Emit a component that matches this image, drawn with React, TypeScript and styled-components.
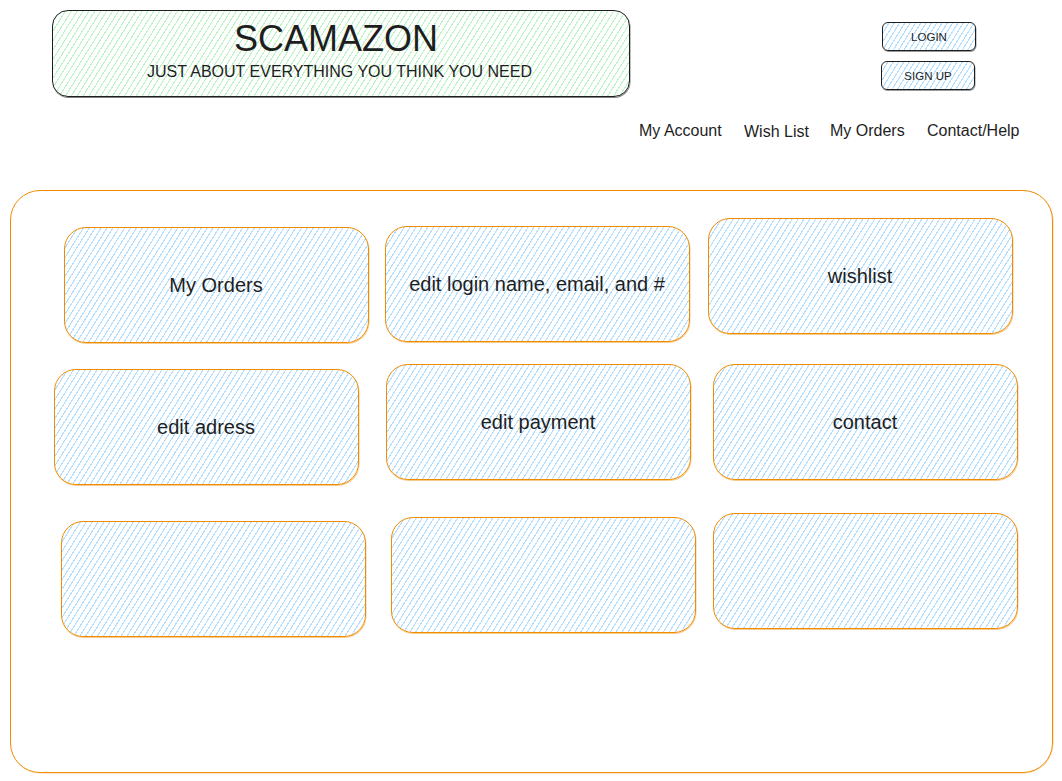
import React from 'react';
import styled, { createGlobalStyle } from 'styled-components';

const GlobalStyle = createGlobalStyle`
  body {
    margin: 0;
    background: #ffffff;
    font-family: "Liberation Sans", Arial, sans-serif;
    color: #1e1e1e;
  }
`;

// hachure fill like the sketch tool draws
const hachure = (color: string, gap = 5) =>
  `repeating-linear-gradient(122deg, ${color} 0 1px, transparent 1.2px ${gap}px)`;

const Page = styled.div`
  width: 1062px;
  height: 781px;
  display: flex;
  flex-direction: column;
  overflow: hidden;
`;

const TopRow = styled.div`
  display: flex;
  align-items: flex-start;
  padding: 10px 0 0 52px;
`;

const Banner = styled.header`
  width: 578px;
  height: 87px;
  box-sizing: border-box;
  border: 1.6px solid #1e1e1e;
  border-radius: 16px;
  box-shadow: 0.5px 1px 0 rgba(30, 30, 30, 0.55);
  background: ${hachure('rgba(178, 242, 187, 0.85)')};
  display: flex;
  flex-direction: column;
  align-items: center;
  padding-top: 7px;
`;

const Title = styled.h1`
  margin: 0 0 0 -10px;
  font-size: 36px;
  font-weight: 400;
  line-height: 42px;
`;

const Tagline = styled.p`
  margin: 2px 0 0 -3px;
  font-size: 16px;
  line-height: 19px;
`;

const AuthColumn = styled.div`
  margin-left: 251px;
  padding-top: 12px;
  display: flex;
  flex-direction: column;
  gap: 10px;
`;

const AuthButton = styled.button<{ $shift?: number }>`
  width: 94px;
  height: 29px;
  box-sizing: border-box;
  margin-left: ${({ $shift }) => $shift ?? 0}px;
  border: 1.6px solid #1e1e1e;
  border-radius: 6px;
  box-shadow: 0.5px 1px 0 rgba(30, 30, 30, 0.45);
  background: ${hachure('rgba(165, 216, 255, 0.85)', 4.5)};
  font-family: "Liberation Sans", Arial, sans-serif;
  font-size: 11.5px;
  color: #1e1e1e;
  padding: 0;
  cursor: pointer;
`;

const Nav = styled.nav`
  display: flex;
  align-items: flex-start;
  margin: 25px 0 0 639px;
`;

const NavSlot = styled.div<{ $width: number }>`
  width: ${({ $width }) => $width}px;
  flex: none;
`;

const NavItem = styled.a<{ $dy: number }>`
  display: inline-block;
  margin-top: ${({ $dy }) => $dy}px;
  font-size: 16px;
  line-height: 18px;
  color: #1e1e1e;
  text-decoration: none;
  white-space: nowrap;
`;

const Panel = styled.main`
  margin: 49px 0 0 10px;
  width: 1043px;
  height: 583px;
  box-sizing: border-box;
  border: 1.6px solid #f08c00;
  border-radius: 30px;
  box-shadow: 0.5px 0.5px 0 rgba(240, 140, 0, 0.4);
  padding: 27px 0 0 42.5px;
`;

const Grid = styled.div`
  display: grid;
  grid-template-columns: repeat(3, 305px);
  grid-template-rows: repeat(3, 116px);
  column-gap: 16px;
  row-gap: 30px;
`;

const Card = styled.button<{ $dx: number; $dy: number }>`
  width: 305px;
  height: 116px;
  box-sizing: border-box;
  margin: ${({ $dy, $dx }) => `${$dy}px 0 0 ${$dx}px`};
  border: 1.7px solid #f08c00;
  border-radius: 22px;
  box-shadow: 0.5px 1px 0 rgba(240, 140, 0, 0.45);
  background: ${hachure('rgba(165, 216, 255, 0.85)')};
  display: flex;
  align-items: center;
  justify-content: center;
  font-family: "Liberation Sans", Arial, sans-serif;
  font-size: 20px;
  color: #1e1e1e;
  padding: 0;
  cursor: pointer;
`;

const navLinks = [
  { label: 'My Account', slot: 105, dy: 0 },
  { label: 'Wish List', slot: 86, dy: 1 },
  { label: 'My Orders', slot: 97, dy: 0 },
  { label: 'Contact/Help', slot: 100, dy: -1 },
];

const cards = [
  { label: 'My Orders', dx: 10, dy: 9 },
  { label: 'edit login name, email, and #', dx: 10, dy: 8 },
  { label: 'wishlist', dx: 12, dy: 0 },
  { label: 'edit adress', dx: 0, dy: 5 },
  { label: 'edit payment', dx: 11, dy: 0 },
  { label: 'contact', dx: 17, dy: 0 },
  { label: '', dx: 7, dy: 11 },
  { label: '', dx: 16, dy: 7 },
  { label: '', dx: 17, dy: 3 },
];

export default function App() {
  return (
    <Page>
      <GlobalStyle />
      <TopRow>
        <Banner>
          <Title>SCAMAZON</Title>
          <Tagline>JUST ABOUT EVERYTHING YOU THINK YOU NEED</Tagline>
        </Banner>
        <AuthColumn>
          <AuthButton $shift={1}>LOGIN</AuthButton>
          <AuthButton>SIGN UP</AuthButton>
        </AuthColumn>
      </TopRow>

      <Nav>
        {navLinks.map((n) => (
          <NavSlot key={n.label} $width={n.slot}>
            <NavItem href="#" $dy={n.dy}>
              {n.label}
            </NavItem>
          </NavSlot>
        ))}
      </Nav>

      <Panel>
        <Grid>
          {cards.map((c, i) => (
            <Card key={i} $dx={c.dx} $dy={c.dy}>
              {c.label}
            </Card>
          ))}
        </Grid>
      </Panel>
    </Page>
  );
}
